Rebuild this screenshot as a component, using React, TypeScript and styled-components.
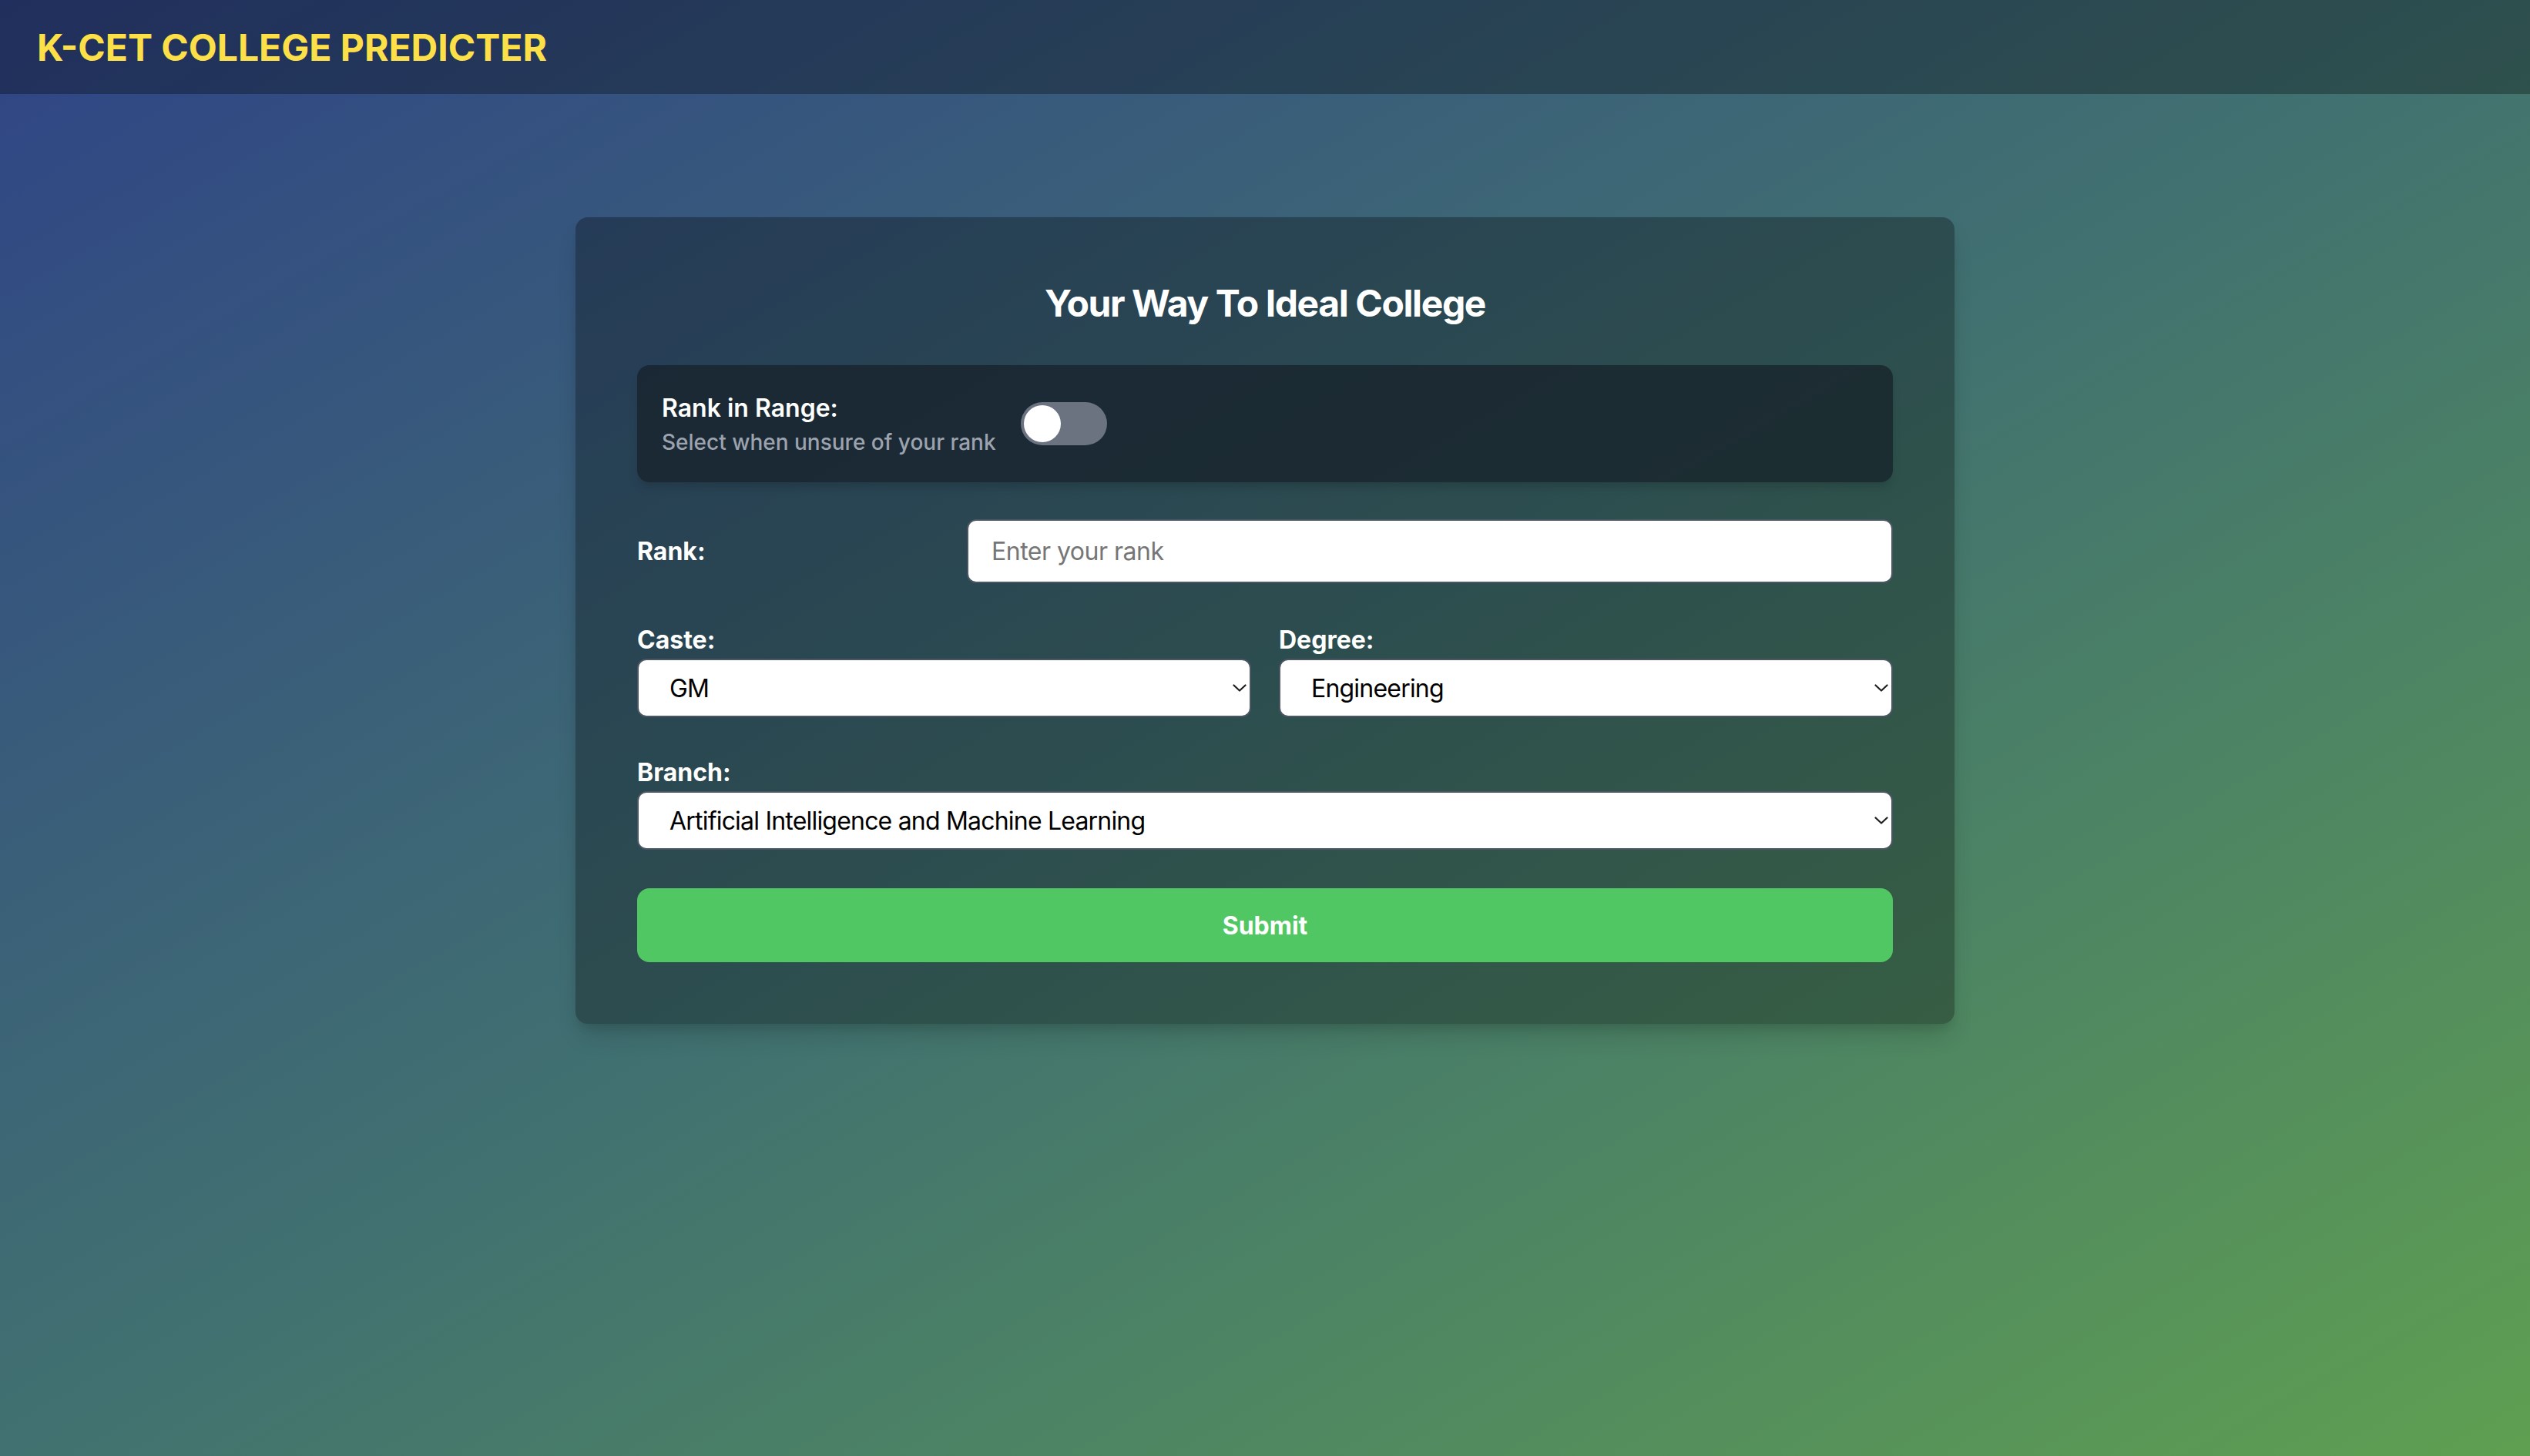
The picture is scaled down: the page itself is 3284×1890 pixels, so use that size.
import styled, { createGlobalStyle } from 'styled-components';
import { ChangeEvent, useState } from 'react';

const GlobalStyle = createGlobalStyle`
  * { box-sizing: border-box; }
  html, body { height: 100%; }
  body {
    margin: 0;
    overflow: hidden;
    font-family: Inter, "Noto Sans", "Liberation Sans", sans-serif;
    color: white;
  }
`;

const casteOptions = ['GM', '1G', '2A', '2B', '3A', '3B', 'SC', 'ST'];
const degreeOptions = ['Engineering', 'Architecture', 'Pharmacy'];
const branchOptions = [
  'Artificial Intelligence and Machine Learning',
  'Computer Science and Engineering',
  'Electronics and Communication Engineering',
  'Mechanical Engineering',
];

// small chevron like the native select arrow
const Chevron = () => (
  <SChevron width="18" height="10" viewBox="0 0 18 10" fill="none">
    <path d="M1.5 1.5 L9 8.5 L16.5 1.5" stroke="#1f1f1f" strokeWidth="2.2" strokeLinecap="round" strokeLinejoin="round" />
  </SChevron>
);

export default function App() {
  // toggle for rank range
  const [inRange, setInRange] = useState<boolean>(false);
  const [rank, setRank] = useState<string>('');
  const [caste, setCaste] = useState<string>('GM');
  const [degree, setDegree] = useState<string>('Engineering');
  const [branch, setBranch] = useState<string>(branchOptions[0]);

  const onChangeRank = (e: ChangeEvent<HTMLInputElement>) => setRank(e.target.value);

  return (
    <SPage>
      <GlobalStyle />
      <SHeader>
        <SBrand>K-CET COLLEGE PREDICTER</SBrand>
      </SHeader>

      <SMain>
        <SCard>
          <STitle>Your Way To Ideal College</STitle>

          <SToggleBox>
            <div>
              <SToggleLabel>Rank in Range:</SToggleLabel>
              <SToggleHint>Select when unsure of your rank</SToggleHint>
            </div>
            <SSwitch type="button" $on={inRange} onClick={() => setInRange(!inRange)}>
              <SKnob />
            </SSwitch>
          </SToggleBox>

          <SRankRow>
            <SRankLabel>Rank:</SRankLabel>
            <SInput type="text" placeholder="Enter your rank" value={rank} onChange={onChangeRank} />
          </SRankRow>

          <STwoCol>
            <div>
              <SLabel>Caste:</SLabel>
              <SSelectWrap>
                <SSelect value={caste} onChange={(e) => setCaste(e.target.value)}>
                  {casteOptions.map((c) => <option key={c}>{c}</option>)}
                </SSelect>
                <Chevron />
              </SSelectWrap>
            </div>
            <div>
              <SLabel>Degree:</SLabel>
              <SSelectWrap>
                <SSelect value={degree} onChange={(e) => setDegree(e.target.value)}>
                  {degreeOptions.map((d) => <option key={d}>{d}</option>)}
                </SSelect>
                <Chevron />
              </SSelectWrap>
            </div>
          </STwoCol>

          <SField>
            <SLabel>Branch:</SLabel>
            <SSelectWrap>
              <SSelect value={branch} onChange={(e) => setBranch(e.target.value)}>
                {branchOptions.map((b) => <option key={b}>{b}</option>)}
              </SSelect>
              <Chevron />
            </SSelectWrap>
          </SField>

          <SSubmit type="button">Submit</SSubmit>
        </SCard>
      </SMain>
    </SPage>
  );
}

const SPage = styled.div`
  height: 100vh;
  overflow: hidden;
  background: linear-gradient(to bottom right, #2f4486 0%, #417170 50%, #5e9f51 100%);
`;

const SHeader = styled.header`
  height: 122px;
  display: flex;
  align-items: center;
  padding: 0 48px;
  background-color: rgba(0, 0, 0, 0.3);
`;

const SBrand = styled.h1`
  margin: 0;
  font-size: 48px;
  font-weight: 700;
  color: #fde047;
`;

const SMain = styled.main`
  display: flex;
  justify-content: center;
  padding-top: 160px;
`;

const SCard = styled.div`
  width: 1790px;
  padding: 80px;
  border-radius: 16px;
  background-color: rgba(0, 0, 0, 0.3);
  box-shadow: 0 20px 30px -6px rgba(0, 0, 0, 0.15), 0 8px 12px -4px rgba(0, 0, 0, 0.1);
`;

const STitle = styled.h2`
  margin: 0 0 48px;
  text-align: center;
  font-size: 48px;
  line-height: 64px;
  font-weight: 700;
  letter-spacing: -1.4px;
`;

const SToggleBox = styled.div`
  display: flex;
  align-items: center;
  padding: 32px;
  margin-bottom: 48px;
  border-radius: 16px;
  background-color: rgba(22, 32, 40, 0.72);
  box-shadow: 0 8px 12px -2px rgba(0, 0, 0, 0.15);
`;

const SToggleLabel = styled.div`
  font-size: 32px;
  line-height: 48px;
  font-weight: 600;
`;

const SToggleHint = styled.div`
  font-size: 28px;
  line-height: 40px;
  font-weight: 500;
  color: #9ca3af;
`;

const SSwitch = styled.button<{ $on: boolean }>`
  margin-left: 32px;
  width: 112px;
  height: 56px;
  padding: 4px;
  border: none;
  border-radius: 28px;
  display: flex;
  justify-content: ${(p) => (p.$on ? 'flex-end' : 'flex-start')};
  background-color: ${(p) => (p.$on ? '#22c55e' : '#6b7280')};
  cursor: pointer;
`;

const SKnob = styled.span`
  width: 48px;
  height: 48px;
  border-radius: 50%;
  background-color: white;
`;

const SRankRow = styled.div`
  display: flex;
  align-items: center;
  margin-bottom: 50px;
`;

const SRankLabel = styled.label`
  flex: 0 0 428px;
  font-size: 32px;
  font-weight: 700;
`;

const SInput = styled.input`
  flex: 1;
  height: 83px;
  padding: 0 30px;
  border: 2px solid #4b5563;
  border-radius: 12px;
  font-family: inherit;
  font-size: 32px;
  letter-spacing: -0.5px;
  color: #111;
  outline: none;
  &::placeholder {
    color: #767676;
  }
`;

const STwoCol = styled.div`
  display: grid;
  grid-template-columns: 1fr 1fr;
  gap: 36px;
  margin-bottom: 48px;
`;

const SField = styled.div`
  margin-bottom: 50px;
`;

const SLabel = styled.label`
  display: block;
  font-size: 32px;
  line-height: 48px;
  font-weight: 700;
`;

const SSelectWrap = styled.div`
  position: relative;
`;

const SSelect = styled.select`
  width: 100%;
  height: 76px;
  padding: 0 40px;
  appearance: none;
  border: 2px solid #4b5563;
  border-radius: 12px;
  background-color: white;
  font-family: inherit;
  font-size: 32px;
  letter-spacing: -0.8px;
  color: #000;
  outline: none;
`;

const SChevron = styled.svg`
  position: absolute;
  right: 6px;
  top: 50%;
  transform: translateY(-50%);
  pointer-events: none;
`;

const SSubmit = styled.button`
  width: 100%;
  height: 96px;
  border: none;
  border-radius: 16px;
  background-color: #50c763;
  color: white;
  font-family: inherit;
  font-size: 32px;
  font-weight: 700;
  cursor: pointer;
`;
